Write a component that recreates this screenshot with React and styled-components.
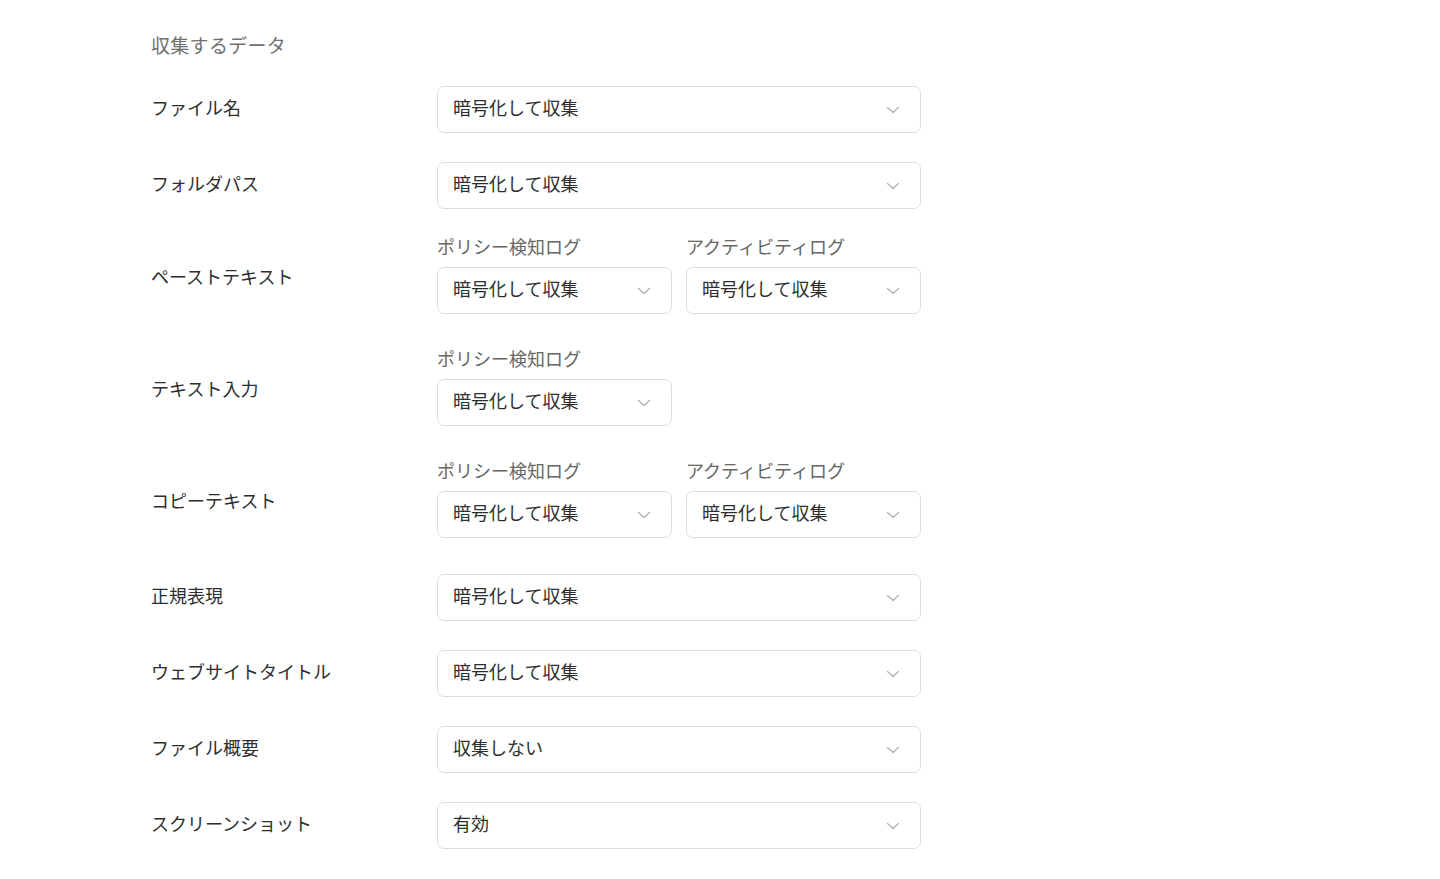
import React from "react";
import styled, { createGlobalStyle } from "styled-components";

const Global = createGlobalStyle`
  html, body { margin: 0; padding: 0; background: #ffffff; }
  body { font-family: "Noto Sans CJK JP", "Noto Sans", sans-serif; color: #333; }
`;

const Page = styled.div`
  padding: 33px 0 30px 151px;
  display: flex;
  flex-direction: column;
  gap: 29px;
  width: 770px;
`;

const Title = styled.div`
  font-size: 19px;
  line-height: 24px;
  color: #707070;
  letter-spacing: 0.3px;
`;

const Row = styled.div`
  display: grid;
  grid-template-columns: 286px 484px;
  align-items: center;
  margin-bottom: ${(p) => (p.$group ? "7px" : "0")};
`;

const Label = styled.div`
  font-size: 18px;
  line-height: 24px;
  padding-bottom: ${(p) => (p.$group ? "1px" : "5px")};
  color: #2e2e2e;
`;

const Fields = styled.div`
  display: grid;
  grid-template-columns: repeat(2, 235px);
  column-gap: 14px;
`;

const Field = styled.div`
  display: flex;
  flex-direction: column;
  gap: 13px;
`;

const SubLabel = styled.div`
  font-size: 18px;
  line-height: 16px;
  color: #666;
`;

const Select = styled.div`
  box-sizing: border-box;
  height: 47px;
  border: 1px solid #dddddd;
  border-radius: 7px;
  background: #fff;
  display: flex;
  align-items: center;
  justify-content: space-between;
  padding: 0 20px 0 15px;
  font-size: 18px;
  color: #2e2e2e;
`;

const Value = styled.span`
  line-height: 24px;
  padding-bottom: 5px;
`;

const Chevron = () => (
  <svg width="14" height="8" viewBox="0 0 14 8" fill="none">
    <path d="M1.5 1.5L7 6.5L12.5 1.5" stroke="#b3b3b3" strokeWidth="1.4" strokeLinecap="round" strokeLinejoin="round" />
  </svg>
);

const Dropdown = ({ value }) => (
  <Select>
    <Value>{value}</Value>
    <Chevron />
  </Select>
);

const ENC = "暗号化して収集";

const rows = [
  { label: "ファイル名", value: ENC },
  { label: "フォルダパス", value: ENC },
  { label: "ペーストテキスト", group: [["ポリシー検知ログ", ENC], ["アクティビティログ", ENC]] },
  { label: "テキスト入力", group: [["ポリシー検知ログ", ENC]] },
  { label: "コピーテキスト", group: [["ポリシー検知ログ", ENC], ["アクティビティログ", ENC]] },
  { label: "正規表現", value: ENC },
  { label: "ウェブサイトタイトル", value: ENC },
  { label: "ファイル概要", value: "収集しない" },
  { label: "スクリーンショット", value: "有効" },
];

export default function App() {
  return (
    <>
      <Global />
      <Page>
        <Title>収集するデータ</Title>
        {rows.map((r) => (
          <Row key={r.label} $group={!!r.group}>
            <Label $group={!!r.group}>{r.label}</Label>
            {r.group ? (
              <Fields>
                {r.group.map(([sub, v]) => (
                  <Field key={sub}>
                    <SubLabel>{sub}</SubLabel>
                    <Dropdown value={v} />
                  </Field>
                ))}
              </Fields>
            ) : (
              <Dropdown value={r.value} />
            )}
          </Row>
        ))}
      </Page>
    </>
  );
}
